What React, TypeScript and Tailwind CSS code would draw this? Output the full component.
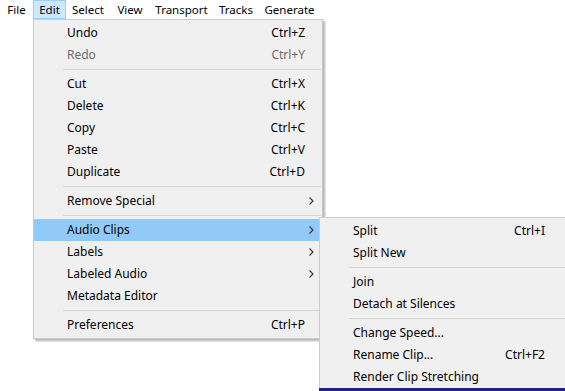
import React from 'react';

type Item =
  | { kind: 'item'; label: string; shortcut?: string; disabled?: boolean; sub?: boolean; active?: boolean }
  | { kind: 'sep' };

const editMenu: Item[] = [
  { kind: 'item', label: 'Undo', shortcut: 'Ctrl+Z' },
  { kind: 'item', label: 'Redo', shortcut: 'Ctrl+Y', disabled: true },
  { kind: 'sep' },
  { kind: 'item', label: 'Cut', shortcut: 'Ctrl+X' },
  { kind: 'item', label: 'Delete', shortcut: 'Ctrl+K' },
  { kind: 'item', label: 'Copy', shortcut: 'Ctrl+C' },
  { kind: 'item', label: 'Paste', shortcut: 'Ctrl+V' },
  { kind: 'item', label: 'Duplicate', shortcut: 'Ctrl+D' },
  { kind: 'sep' },
  { kind: 'item', label: 'Remove Special', sub: true },
  { kind: 'sep' },
  { kind: 'item', label: 'Audio Clips', sub: true, active: true },
  { kind: 'item', label: 'Labels', sub: true },
  { kind: 'item', label: 'Labeled Audio', sub: true },
  { kind: 'item', label: 'Metadata Editor' },
  { kind: 'sep' },
  { kind: 'item', label: 'Preferences', shortcut: 'Ctrl+P' },
];

const clipMenu: Item[] = [
  { kind: 'item', label: 'Split', shortcut: 'Ctrl+I' },
  { kind: 'item', label: 'Split New' },
  { kind: 'sep' },
  { kind: 'item', label: 'Join' },
  { kind: 'item', label: 'Detach at Silences' },
  { kind: 'sep' },
  { kind: 'item', label: 'Change Speed...' },
  { kind: 'item', label: 'Rename Clip...', shortcut: 'Ctrl+F2' },
  { kind: 'item', label: 'Render Clip Stretching' },
];

// menu bar entries with the widths they take in the window
const bar = [
  { label: 'File', w: 'w-[33px]' },
  { label: 'Edit', w: 'w-[33px]' },
  { label: 'Select', w: 'w-[44px]' },
  { label: 'View', w: 'w-[40px]' },
  { label: 'Transport', w: 'w-[63px]' },
  { label: 'Tracks', w: 'w-[46px]' },
  { label: 'Generate', w: 'w-[61px]' },
];

const Chevron = () => (
  <svg width="5" height="8" viewBox="0 0 5 8" className="text-[#333]">
    <path d="M0.5 0.5 L4 4 L0.5 7.5" fill="none" stroke="currentColor" strokeWidth="1.1" />
  </svg>
);

const MenuList: React.FC<{ items: Item[]; shortcutRight: number }> = ({ items, shortcutRight }) => (
  <div className="flex flex-col py-[2px]">
    {items.map((it, i) =>
      it.kind === 'sep' ? (
        <div key={i} className="h-[7px] flex items-center pl-[29px] pr-[1px]">
          <div className="h-px w-full bg-[#d4d4d4]" />
        </div>
      ) : (
        <div
          key={i}
          className={`h-[22px] flex items-center pl-[33px] ${it.active ? 'bg-[#91c9f7]' : ''} ${
            it.disabled ? 'text-[#6d6d6d]' : 'text-black'
          }`}
        >
          <span className="flex-1 whitespace-nowrap">{it.label}</span>
          {it.shortcut && (
            <span className="whitespace-nowrap" style={{ marginRight: shortcutRight }}>
              {it.shortcut}
            </span>
          )}
          {it.sub && (
            <span className="w-[5px] mr-[8px] flex items-center">
              <Chevron />
            </span>
          )}
        </div>
      )
    )}
  </div>
);

export default function App() {
  return (
    <div
      className="relative w-[565px] h-[391px] overflow-hidden bg-white text-[12px] leading-none"
      style={{ fontFamily: '"Noto Sans", "Open Sans", sans-serif' }}
    >
      {/* menu bar */}
      <div className="h-[19px] flex items-stretch text-[11.5px]">
        {bar.map((b) => (
          <div
            key={b.label}
            className={`${b.w} shrink-0 flex items-center justify-center whitespace-nowrap border ${
              b.label === 'Edit' ? 'bg-[#cce8ff] border-[#99d1ff]' : 'border-transparent'
            }`}
          >
            {b.label}
          </div>
        ))}
      </div>

      {/* Edit menu */}
      <div className="absolute left-[33px] top-[19px] w-[290px] bg-[#f0f0f0] border border-[#cccccc] shadow-[2px_2px_2px_rgba(0,0,0,0.3)]">
        <MenuList items={editMenu} shortcutRight={17} />
      </div>

      {/* Audio Clips submenu */}
      <div className="absolute left-[319px] top-[217px] w-[250px] bg-[#f0f0f0] border border-[#cccccc]">
        <MenuList items={clipMenu} shortcutRight={23} />
      </div>
      <div className="absolute left-[319px] top-[388px] w-[250px] h-[3px] bg-[#20208a]" />
    </div>
  );
}
